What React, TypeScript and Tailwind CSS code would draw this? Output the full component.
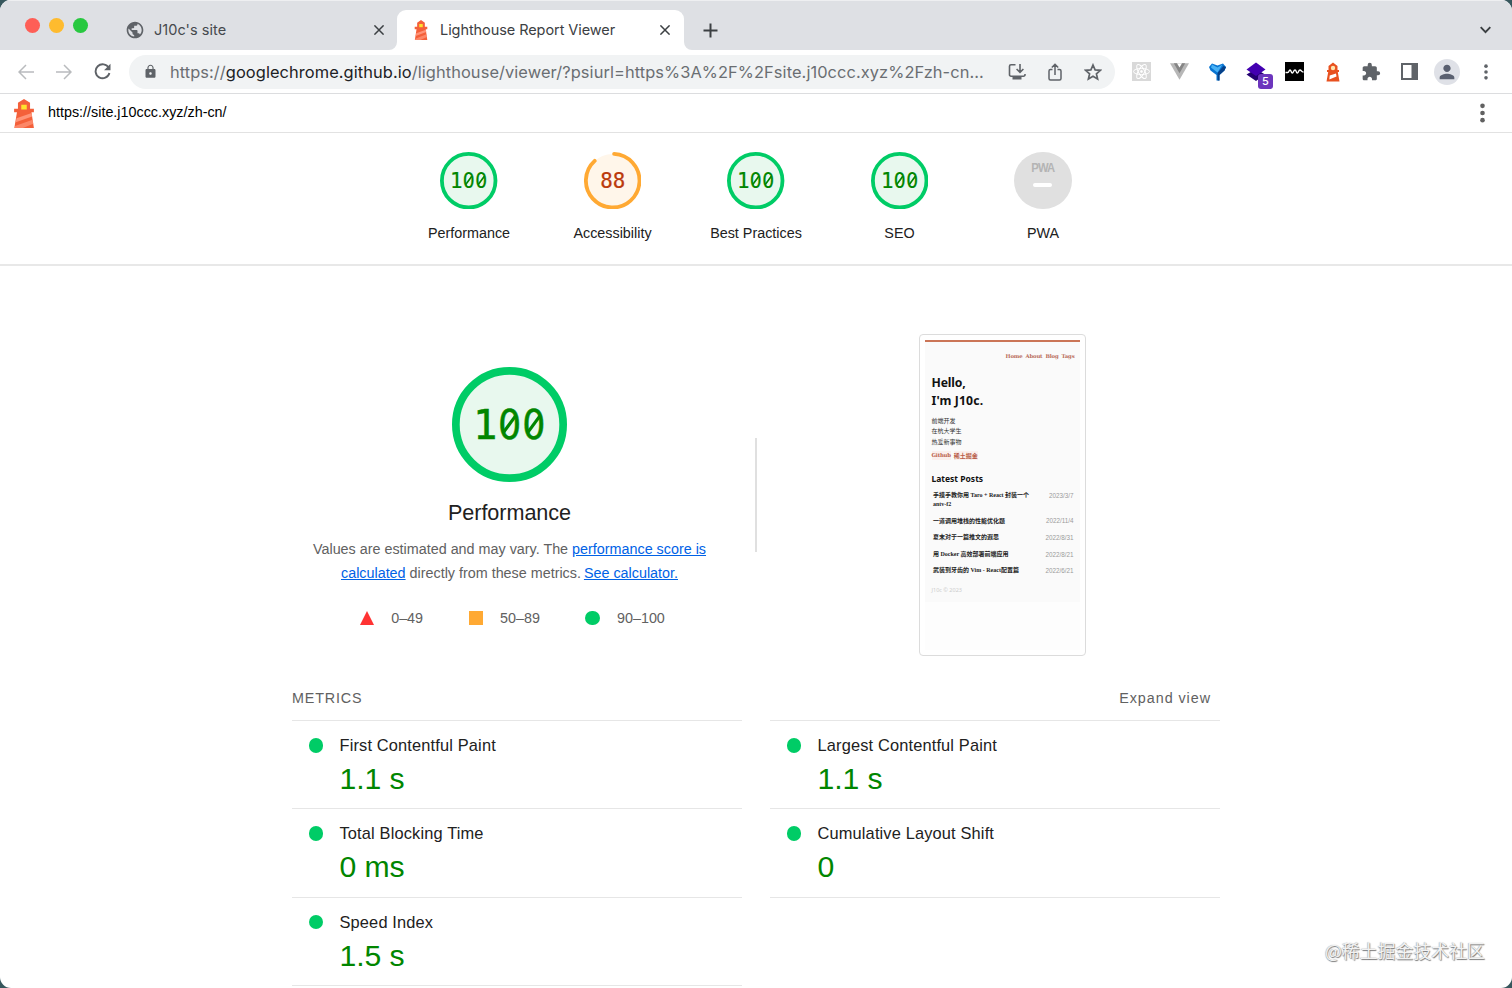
import React from 'react';
import { MdPublic, MdLock, MdExtension, MdPerson } from 'react-icons/md';

function Lighthouse({ className }: { className: string }) {
  return (
    <svg className={className} viewBox="0 0 20 30" preserveAspectRatio="none">
      <path d="M10 0 15.500 4v6H19v3.800h-2.200L19 30H1.200L3.600 13.800H1V10h3.500V4z" fill="#f4603a" />
      <path d="M7.500 6h5v4.800h-5z" fill="#ffe22e" />
      <path d="M3.200 20 17 14.500l.4 3.500L2.500 24z" fill="#ff9478" />
      <path d="M1.900 28 17.800 21.500l.6 4L9 30H1.500z" fill="#ff9478" opacity=".75" />
    </svg>
  );
}

function Dots({ className, r }: { className: string; r: number }) {
  return (
    <svg className={className} viewBox="0 0 6 20">
      <circle cx="3" cy="3.500" r={r} />
      <circle cx="3" cy="10" r={r} />
      <circle cx="3" cy="16.500" r={r} />
    </svg>
  );
}

function Close() {
  return (
    <svg className="h-[10px] w-[10px]" viewBox="0 0 10 10" stroke="#3c4043" strokeWidth="1.5" fill="none">
      <path d="M.4.4l9.200 9.200M9.600.4.4 9.600" />
    </svg>
  );
}

function Gauge({ size, score, stroke, digit }: { size: number; score: number; stroke: number; digit: number }) {
  const pass = score >= 90;
  const c = size / 2;
  const r = c - stroke / 2;
  const len = 2 * Math.PI * r;
  const text = String(score);
  const adv = digit * 0.602;
  const base = c + digit * 0.355;
  const capH = digit * 0.729;
  return (
    <svg width={size} height={size} viewBox={`0 0 ${size} ${size}`}>
      <circle cx={c} cy={c} r={r} fill={pass ? '#e8f8ee' : '#fff6ea'} />
      <circle
        cx={c} cy={c} r={r} fill="none" stroke={pass ? '#00cc66' : '#ffa933'} strokeWidth={stroke} strokeLinecap="round"
        strokeDasharray={pass ? undefined : `${len * (score / 100) - stroke / 2} ${len}`}
        transform={`rotate(${pass ? -90 : -87} ${c} ${c})`}
      />
      {text.split('').map((ch, i) => {
        const x = c + (i - (text.length - 1) / 2) * adv;
        const color = pass ? '#018600' : '#bb3a0c';
        return ch === '0' ? (
          <g key={i} fill={color} stroke={color} strokeWidth={digit * 0.012}>
            <text transform={`translate(${x} ${base}) scale(.9 1)`} textAnchor="middle" fontSize={digit} fontFamily="DejaVu Sans, sans-serif">0</text>
            <line x1={x - digit * 0.15} x2={x + digit * 0.15} y1={base - capH * 0.22} y2={base - capH * 0.78} strokeWidth={digit * 0.08} />
          </g>
        ) : (
          <text key={i} x={x} y={base} textAnchor="middle" fill={color} stroke={color} strokeWidth={digit * 0.012} fontSize={digit} fontFamily="DejaVu Sans Mono, monospace">{ch}</text>
        );
      })}
    </svg>
  );
}

function TabBar() {
  return (
    <div className="flex h-[50px] items-end border-t border-[#eeeff1] bg-[#dee0e4]">
      <div className="flex h-[49px] w-[126px] items-start gap-[9px] pl-[24.500px] pt-[17px]">
        <i className="h-[15px] w-[15px] rounded-full bg-[#fe5f57]" />
        <i className="h-[15px] w-[15px] rounded-full bg-[#febb2e]" />
        <i className="h-[15px] w-[15px] rounded-full bg-[#28c840]" />
      </div>
      <div className="flex h-[40px] w-[263px] items-center">
        <MdPublic className="-ml-px h-[20px] w-[20px] text-[#5f6368]" />
        <span className="ml-[9px] text-[14.500px] tracking-[0.05px] text-[#45494d]">J10c's site</span>
        <span className="ml-auto mr-[5px]"><Close /></span>
      </div>
      <svg className="h-[8px] w-[8px] shrink-0" viewBox="0 0 8 8"><path d="M8 0v8H0a8 8 0 0 0 8-8z" fill="#fff" /></svg>
      <div className="flex h-[40.500px] w-[287px] items-center rounded-t-[9px] bg-white pl-[17px] pr-[14px]">
        <Lighthouse className="h-[20px] w-[14px]" />
        <span className="ml-[12px] text-[14.500px] tracking-[-0.07px] text-[#3c4043]">Lighthouse Report Viewer</span>
        <span className="ml-auto"><Close /></span>
      </div>
      <svg className="h-[8px] w-[8px] shrink-0" viewBox="0 0 8 8"><path d="M0 0v8h8a8 8 0 0 1-8-8z" fill="#fff" /></svg>
      <div className="flex h-[40px] flex-1 items-center justify-between pl-[11px] pr-[21px]">
        <svg className="h-[15px] w-[15px]" viewBox="0 0 15 15" stroke="#3c4043" strokeWidth="2"><path d="M7.500.5v14M.5 7.500h14" /></svg>
        <svg className="h-[8px] w-[11px]" viewBox="0 0 11 8" stroke="#3c4043" strokeWidth="1.900" fill="none"><path d="M.7 1.200l4.800 5 4.800-5" /></svg>
      </div>
    </div>
  );
}

function Cell({ children }: { children: React.ReactNode }) {
  return <div className="flex w-[38.300px] shrink-0 items-center justify-center">{children}</div>;
}

function Toolbar() {
  return (
    <div className="flex h-[44px] items-center border-b border-[#dcdddf] bg-white pl-[7px]">
      <Cell>
        <svg className="h-[16px] w-[16px]" viewBox="0 0 16 16" stroke="#b9bbbe" strokeWidth="1.500" fill="none"><path d="M16 8H1.500M8 1 1 8 8 15" /></svg>
      </Cell>
      <Cell>
        <svg className="h-[16px] w-[16px]" viewBox="0 0 16 16" stroke="#b9bbbe" strokeWidth="1.500" fill="none"><path d="M0 8h14.500M8 1 15 8 8 15" /></svg>
      </Cell>
      <Cell>
        <svg className="h-[17px] w-[17px]" viewBox="0 0 17 17"><path d="M14.800 5A7 7 0 1 0 15.400 10" fill="none" stroke="#5f6368" strokeWidth="1.900" /><path d="M16.500.8v6.400h-6.400z" fill="#5f6368" /></svg>
      </Cell>
      <div className="ml-[7.500px] flex h-[34px] w-[986px] shrink-0 items-center rounded-full bg-[#f1f3f4] pl-[14px]">
        <MdLock className="h-[15px] w-[15px] text-[#5f6368]" />
        <div className="ml-[11.500px] w-[827.500px] whitespace-nowrap pt-px text-[16.400px] tracking-[0.085px] text-[#6a6e72]">
          https://<span className="text-[#202124]">googlechrome.github.io</span>/lighthouse/viewer/?psiurl=https%3A%2F%2Fsite.j10ccc.xyz%2Fzh-cn...
        </div>
        <Cell>
          <svg className="h-[18px] w-[18px]" viewBox="0 0 18 18" stroke="#5f6368" strokeWidth="1.600" fill="none"><path d="M7.500 1.800H3A1.500 1.500 0 0 0 1.500 3.300v8.400A1.500 1.500 0 0 0 3 13.200h12.500a1.500 1.500 0 0 0 1.500-1.500V11M12 1v8.300M8.600 6l3.400 3.400L15.400 6" /><path d="M4.500 13.500h9v3h-9z" fill="#5f6368" stroke="none" /></svg>
        </Cell>
        <Cell>
          <svg className="h-[18px] w-[14px]" viewBox="0 0 14 18" stroke="#5f6368" strokeWidth="1.500" fill="none"><path d="M4.500 6.500h-2a1.500 1.500 0 0 0-1.500 1.500v7.500A1.500 1.500 0 0 0 2.500 17h9a1.500 1.500 0 0 0 1.500-1.500V8a1.500 1.500 0 0 0-1.500-1.500h-2M7 12V1.500M3.800 4.500 7 1.300l3.200 3.200" /></svg>
        </Cell>
        <Cell>
          <svg className="h-[18px] w-[18px]" viewBox="0 0 18 18"><path d="M9 2 11.100 6.900 16.400 7.300 12.400 10.800 13.600 16 9 13.200 4.400 16 5.600 10.800 1.600 7.300 6.900 6.900z" fill="none" stroke="#5f6368" strokeWidth="1.700" /></svg>
        </Cell>
      </div>
      <div className="ml-[6.500px] flex items-center">
        <Cell>
          <svg className="h-[19px] w-[19px]" viewBox="0 0 19 19" fill="none" stroke="#fff" strokeWidth="1">
            <path d="M0 0h19v19H0z" fill="#d9d9d9" stroke="none" />
            <ellipse cx="9.500" cy="9.500" rx="8" ry="3.100" />
            <ellipse cx="9.500" cy="9.500" rx="8" ry="3.100" transform="rotate(60 9.500 9.500)" />
            <ellipse cx="9.500" cy="9.500" rx="8" ry="3.100" transform="rotate(120 9.500 9.500)" />
            <circle cx="9.500" cy="9.500" r="1" fill="#fff" />
          </svg>
        </Cell>
        <Cell>
          <svg className="h-[17px] w-[19px]" viewBox="0 0 19 17"><path d="M0 .3h19L9.500 16.700z" fill="#b7b7b7" /><path d="M3.800.3h11.400L9.500 10.200z" fill="#858585" /><path d="M7 .3h5L9.500 4.600z" fill="#fff" /></svg>
        </Cell>
        <Cell>
          <svg className="h-[18px] w-[17px]" viewBox="0 0 17 18"><path d="M3 .5 8.500 2.500 14 .5 17 4 15.500 7.500 10.500 12V17.500H7.500V12L1.500 7.500 0 4z" fill="#0874d1" /><path d="M3 1.500 8.500 4.500 13.500 1.500 8.500 9.500 2 4.500z" fill="#48b1f5" /><path d="M8.700 17.500 8.500 10 14.500 3 17 4 15.500 7.500 10.500 12v5.500z" fill="#064088" /></svg>
        </Cell>
        <Cell>
          <div className="relative h-[20px] w-[20px]">
            <svg className="h-[20px] w-[20px]" viewBox="0 0 20 20"><path d="M10 7 19 12.500 10 19 .5 12.500z" fill="#230071" /><path d="M10 .500 19.500 7.500 10 14 .500 7.500z" fill="#4300b1" /></svg>
            <span className="absolute left-[12px] top-[12px] flex h-[15px] w-[15px] items-center justify-center rounded-[3px] bg-[#6c35bd] text-[11px] font-medium text-white">5</span>
          </div>
        </Cell>
        <Cell>
          <svg className="h-[19px] w-[19px]" viewBox="0 0 19 19"><path d="M0 0h19v19H0z" /><path d="M.5 10.500h2.200c1.500 0 1-2.500 2.300-2.500s1 3 2.300 3S8.500 8 10 8s1 3 2.300 3 1-3 2.700-3 1 2 3.500 2" fill="none" stroke="#fff" strokeWidth="1.400" /></svg>
        </Cell>
        <Cell>
          <svg className="h-[20px] w-[14px]" viewBox="0 0 14 20"><path d="M7 .5 11.500 4v4H13v2h-1.200L13.500 19.500H.5L2.200 10H1V8h1.500V4z" fill="#e8511f" /><circle cx="7" cy="6" r="2.200" fill="#ffe5ae" /><path d="M3.700 13.500 10 11.500l.5 3-7.200 3z" fill="#fff" /></svg>
        </Cell>
        <Cell><MdExtension className="h-[20px] w-[20px] text-[#5f6368]" /></Cell>
        <Cell>
          <svg className="h-[17px] w-[17px]" viewBox="0 0 17 17"><path d="M0 0h17v17H0z" fill="#5f6368" /><path d="M2 2h8.500v13H2z" fill="#fff" /></svg>
        </Cell>
        <Cell><div className="flex h-[26px] w-[26px] items-center justify-center rounded-full bg-[#dfe1e7]"><MdPerson className="h-[22px] w-[22px] text-[#5a6070]" /></div></Cell>
        <Cell><Dots className="h-[18px] w-[6px] fill-[#5f6368]" r={2} /></Cell>
      </div>
    </div>
  );
}

const scores = [['Performance', 100], ['Accessibility', 88], ['Best Practices', 100], ['SEO', 100]] as const;

function ScoreHeader() {
  return (
    <div className="flex h-[133px] justify-center border-b-2 border-[#e8e8e8] pt-[19px] text-[14.350px] text-[#212121]">
      {scores.map(([name, score]) => (
        <div key={name} className="flex w-[143.500px] flex-col items-center">
          <Gauge size={57.4} score={score} stroke={3.8} digit={20.8} />
          <span className="mt-[13.600px] leading-[20px]">{name}</span>
        </div>
      ))}
      <div className="flex w-[143.500px] flex-col items-center">
        <div className="flex h-[57.400px] w-[57.400px] flex-col items-center rounded-full bg-[#e0e0e0] pt-[9px]">
          <span className="scale-x-90 text-[12.500px] font-bold leading-[14px] tracking-[-1px] text-[#b4b4b4]">PWA</span>
          <i className="mt-[7.500px] h-[4px] w-[19px] rounded-full bg-white" />
        </div>
        <span className="mt-[13.600px] leading-[20px]">PWA</span>
      </div>
    </div>
  );
}

function Summary() {
  return (
    <div className="flex w-[435px] flex-col items-center pt-[33px]">
      <Gauge size={115} score={100} stroke={7.7} digit={40.5} />
      <h2 className="mt-[17px] text-[21.600px] leading-[28px] tracking-[-0.05px] text-[#212121]">Performance</h2>
      <p className="mt-[10px] whitespace-nowrap text-center text-[14.350px] leading-[24px] text-[#616161]">
        Values are estimated and may vary. The <a className="text-[#0062e6] underline">performance score is</a>
        <br />
        <a className="text-[#0062e6] underline">calculated</a> directly from these metrics. <a className="-ml-px text-[#0062e6] underline">See calculator.</a>
      </p>
      <div className="mt-[21px] flex items-center pl-[6px] text-[14.350px] leading-[24px] text-[#616161]">
        <svg className="mr-[17px] h-[14px] w-[14px]" viewBox="0 0 14 14"><path d="M7 0l7 14H0z" fill="#f33" /></svg>0–49
        <i className="ml-[45.500px] mr-[17px] h-[14.500px] w-[14.500px] bg-[#ffa933]" />50–89
        <i className="ml-[45.500px] mr-[17px] h-[14.500px] w-[14.500px] rounded-full bg-[#00cc66]" />90–100
      </div>
    </div>
  );
}

const posts = [
  ['一道调用堆栈的性能优化题', '2022/11/4'],
  ['夏末对于一篇推文的遐思', '2022/8/31'],
  ['用 Docker 高效部署前端应用', '2022/8/21'],
  ['武装到牙齿的 Vim - React配置篇', '2022/6/21'],
];

function Thumbnail() {
  return (
    <div className="h-[322px] w-[167px] rounded-[4px] border border-[#dcdcdc] p-[5px] font-['Noto_Sans','Noto_Sans_CJK_SC',sans-serif]">
      <div className="h-[262px] border-t-2 border-[#cb7557] bg-[#fafafa]">
        <div className="flex h-[27px] items-center justify-end gap-[3px] pr-[5.500px] pt-[3px] font-['DejaVu_Serif','Noto_Sans_CJK_SC',serif] text-[5.300px] font-bold tracking-[-0.15px] text-[#b86a58]">
          <span>Home</span><span>About</span><span>Blog</span><span>Tags</span>
        </div>
        <div className="px-[6.500px]">
          <div className="mt-[5px] text-[12.200px] font-bold leading-[18px] tracking-[-0.15px] text-[#111]">Hello,<br /><span className="tracking-[0.15px]">I'm J10c.</span></div>
          <div className="mt-[5.500px] text-[6px] leading-[10.600px] text-[#333]">前端开发<br />在杭大学生<br />热爱新事物</div>
          <div className="mt-[4px] flex gap-[3px] font-['DejaVu_Serif','Noto_Sans_CJK_SC',serif] text-[6px] font-bold leading-[9px] text-[#b85c48]">
            <span className="bg-[#faefec] text-[5.300px] tracking-[-0.2px]">Github</span><span className="bg-[#faefec]">稀土掘金</span>
          </div>
          <div className="mt-[12.500px] text-[8.500px] font-bold leading-[12px] text-[#111]">Latest Posts</div>
          <div className="mt-[6px] flex justify-between pl-[1.500px] font-['Liberation_Serif','Noto_Sans_CJK_SC',serif] text-[6px] font-semibold leading-[9.500px] text-[#222]">
            <span className="whitespace-nowrap">手摸手教你用 Taro + React 封装一个<br />antv-f2</span>
            <span className="font-['Liberation_Sans',sans-serif] text-[6.300px] font-normal text-[#9a9a9a]">2023/3/7</span>
          </div>
          <div className="mt-[3px]">
            {posts.map(([t, d]) => (
              <div key={t} className="flex h-[16.600px] items-center justify-between pl-[1.500px] font-['Liberation_Serif','Noto_Sans_CJK_SC',serif] text-[6px] font-semibold text-[#222]">
                <span>{t}</span><span className="font-['Liberation_Sans',sans-serif] text-[6.300px] font-normal text-[#9a9a9a]">{d}</span>
              </div>
            ))}
          </div>
          <div className="mt-[7px] text-[5.500px] leading-[8px] text-[#ccc]">J10c © 2023</div>
        </div>
      </div>
      <div className="h-[48px] bg-[#fdfdfd]" />
    </div>
  );
}

function Metric({ name, value }: { name: string; value: string }) {
  return (
    <div className="flex h-[88.400px] border-t border-[#e6e6e6] pl-[16.500px] pt-[12px]">
      <i className="mt-[5px] h-[14.500px] w-[14.500px] rounded-full bg-[#00cc66]" />
      <div className="ml-[16.500px]">
        <div className="text-[16.400px] leading-[24px] tracking-[0.15px] text-[#212121]">{name}</div>
        <div className="mt-[4px] text-[30.200px] leading-[36px] tracking-[-0.1px] text-[#018600]">{value}</div>
      </div>
    </div>
  );
}

export default function App() {
  return (
    <div className="h-[988px] w-[1512px] overflow-hidden bg-[#37575d]">
      <div className="relative flex h-[988px] flex-col overflow-hidden rounded-[11px] bg-white font-['Inter',sans-serif]">
        <TabBar />
        <Toolbar />
        <main className="flex-1 overflow-hidden font-['Liberation_Sans','Noto_Sans_CJK_SC',sans-serif]">
          <div className="flex h-[39px] items-center border-b border-[#e2e2e2] pl-[13px] pr-[26.500px] text-[14.350px] text-black">
            <Lighthouse className="h-[29px] w-[22px]" />
            <span className="ml-[13px]">https://site.j10ccc.xyz/zh-cn/</span>
            <Dots className="ml-auto h-[22px] w-[7px] fill-[#616161]" r={2.1} />
          </div>
          <ScoreHeader />
          <div className="mx-auto w-[928px]">
            <div className="flex h-[391px] pt-[68px]">
              <Summary />
              <div className="flex w-[58px] justify-center"><i className="mt-[104px] h-[114px] w-[1.500px] bg-[#e0e0e0]" /></div>
              <div className="flex w-[435px] justify-center"><Thumbnail /></div>
            </div>
            <div className="flex h-[63px] items-center justify-between pr-[9px] text-[14.350px] text-[#616161]">
              <span className="pt-[20px] tracking-[0.850px]">METRICS</span>
              <span className="pt-[20px] tracking-[0.950px]">Expand view</span>
            </div>
            <div className="flex gap-[28px]">
              <div className="w-[450px] border-b border-[#e6e6e6]">
                <Metric name="First Contentful Paint" value="1.1 s" />
                <Metric name="Total Blocking Time" value="0 ms" />
                <Metric name="Speed Index" value="1.5 s" />
              </div>
              <div className="w-[450px] self-start border-b border-[#e6e6e6]">
                <Metric name="Largest Contentful Paint" value="1.1 s" />
                <Metric name="Cumulative Layout Shift" value="0" />
              </div>
            </div>
          </div>
        </main>
        <div className="absolute bottom-[25px] right-[27px] font-['Noto_Sans_CJK_SC',sans-serif] text-[17.900px] leading-[26px] text-[#f2f2f2] [text-shadow:0.7px_0.7px_1px_#777,-0.5px_-0.5px_1px_#aaa]">@稀土掘金技术社区</div>
      </div>
    </div>
  );
}
